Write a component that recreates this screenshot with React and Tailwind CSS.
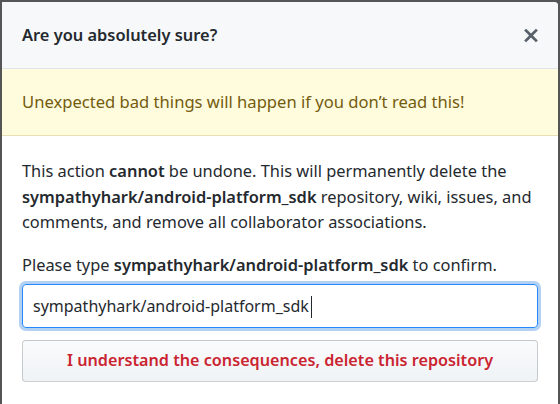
export default function App() {
  const repo = 'sympathyhark/android-platform_sdk'

  return (
    <div className="h-[404px] w-[560px] overflow-hidden bg-[#555] pl-[2px] pt-[2px] font-['Noto_Sans','Open_Sans',sans-serif] text-[#24292e]">
      <div className="h-[420px] w-[556px] overflow-hidden rounded-tr-[4px] bg-white">
        {/* header */}
        <div className="flex h-[67px] items-center justify-between border-b border-[#e1e4e8] bg-[#f6f8fa] pl-[20px] pr-[19px]">
          <h3 className="text-[16.4px] font-semibold">Are you absolutely sure?</h3>
          <button className="flex h-[20px] w-[16px] items-center justify-center text-[#586069]" aria-label="Close dialog">
            <svg width="16" height="21" viewBox="0 0 12 16" fill="currentColor" aria-hidden="true">
              <path fillRule="evenodd" d="M7.48 8l3.75 3.75-1.48 1.48L6 9.48l-3.75 3.75-1.48-1.48L4.52 8 .77 4.25l1.48-1.48L6 6.52l3.75-3.75 1.48 1.48L7.48 8z" />
            </svg>
          </button>
        </div>

        {/* warning flash */}
        <div className="flex h-[67px] items-center border-b border-[#e8dfb5] bg-[#fffbdd] pl-[20px] text-[16.6px] text-[#735c0f]">
          Unexpected bad things will happen if you don’t read this!
        </div>

        {/* body */}
        <div className="px-[20px] pt-[22px] text-[16.4px] leading-[25.5px]">
          <p>
            This action <strong className="font-semibold">cannot</strong> be undone. This will permanently delete the{' '}
            <strong className="font-semibold">{repo}</strong> repository, wiki, issues, and comments, and remove all
            collaborator associations.
          </p>
          <p className="mt-[17px]">
            Please type <strong className="font-semibold">{repo}</strong> to confirm.
          </p>

          <div className="relative mt-[7px]">
            <input
              defaultValue={repo}
              className="block h-[44px] w-full rounded-[4px] border border-[#2188ff] px-[10px] text-[16px] text-[#24292e] shadow-[0_0_0_3px_rgba(3,102,214,0.3)] outline-none"
            />
            <span className="absolute left-[289px] top-[12px] h-[22px] w-px bg-[#24292e]" aria-hidden="true" />
          </div>

          <button className="mt-[12px] block h-[42px] w-full rounded-[4px] border border-[rgba(27,31,35,0.2)] bg-gradient-to-b from-[#fafbfc] to-[#eff3f6] text-[16.2px] font-semibold text-[#cb2431]">
            I understand the consequences, delete this repository
          </button>
        </div>
      </div>
    </div>
  )
}
